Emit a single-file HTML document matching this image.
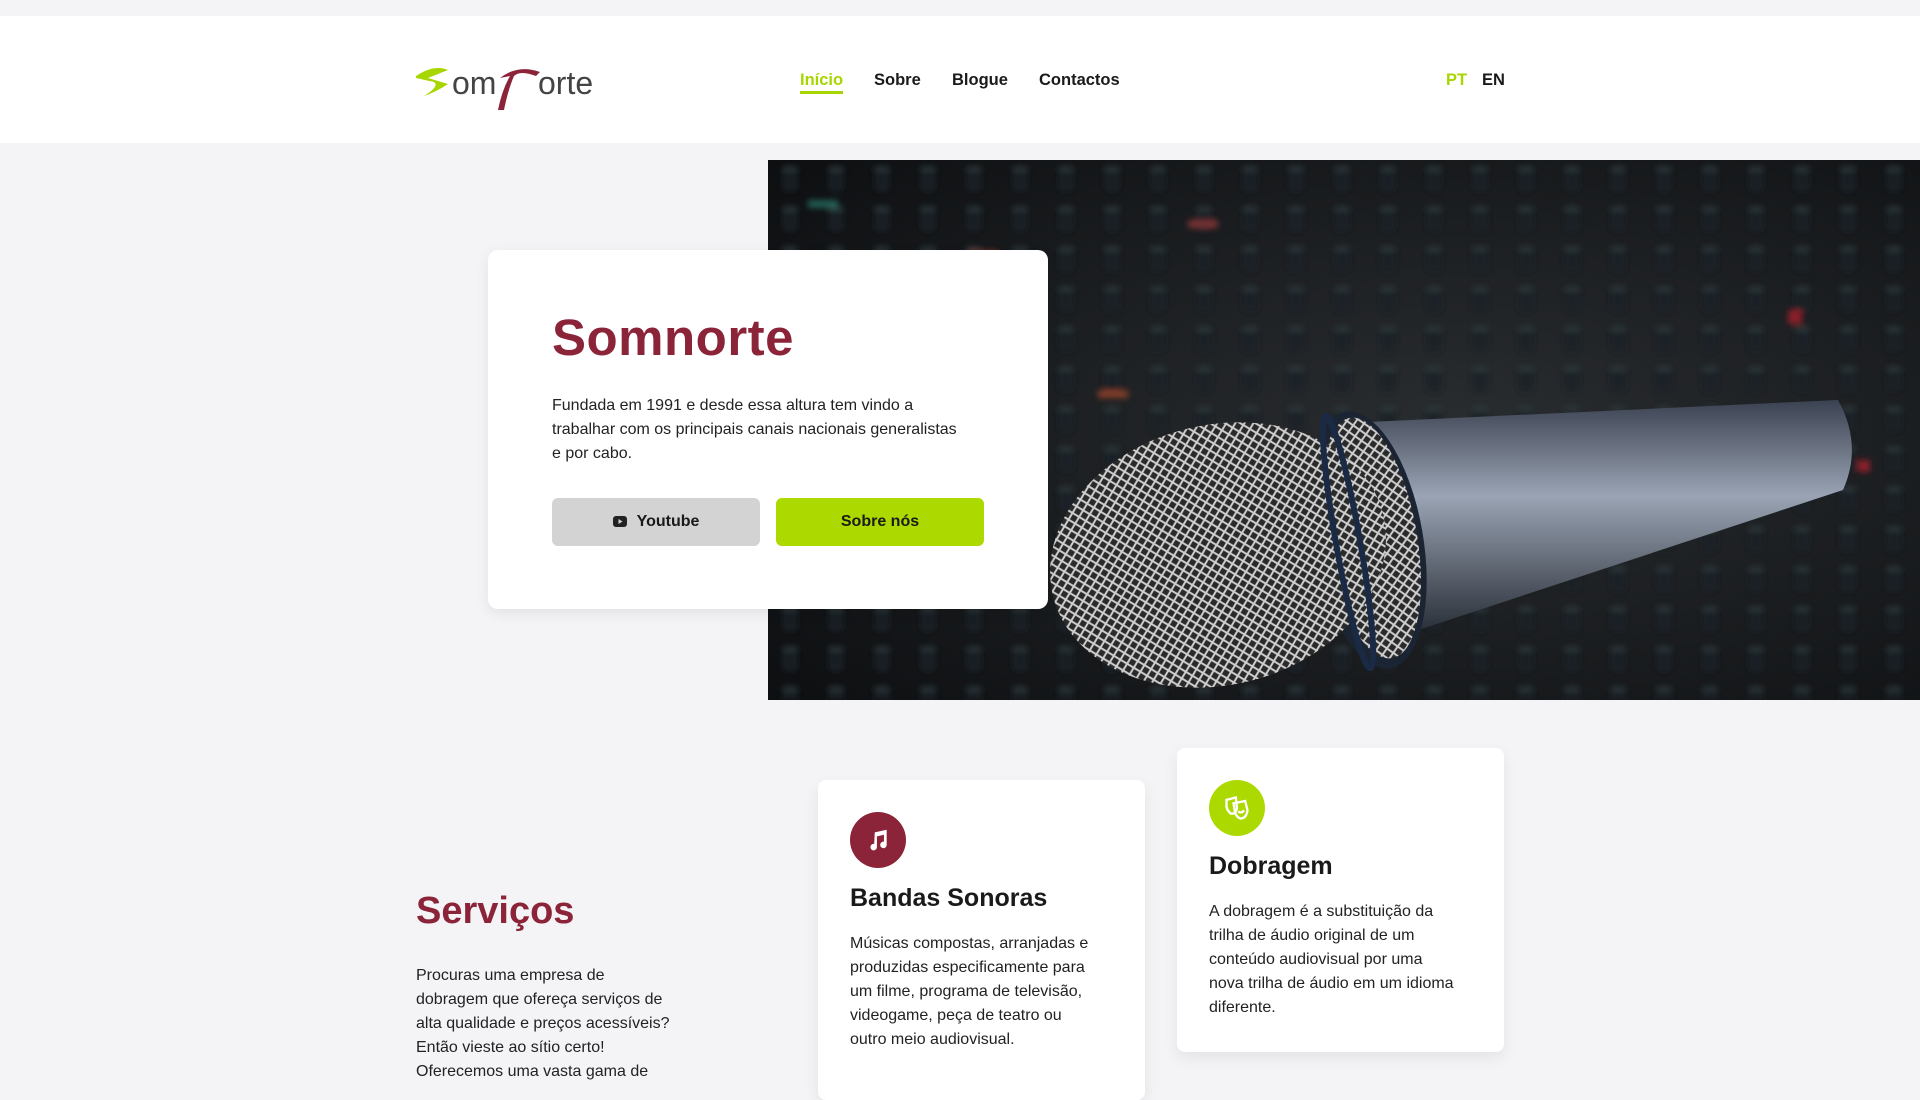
<!DOCTYPE html>
<html><head><meta charset="utf-8"><style>
*{margin:0;padding:0;box-sizing:border-box}
body{width:1920px;height:1080px;overflow:hidden;background:#f4f4f6;font-family:"Liberation Sans",sans-serif;color:#222;position:relative}
header{position:absolute;left:0;top:16px;width:1920px;height:127px;background:#fff}
.nav a{position:absolute;top:55px;font-size:16.5px;font-weight:bold;color:#1a1a1a;text-decoration:none}
.hero{position:absolute;left:768px;top:160px;width:1152px;height:540px;overflow:hidden;background:#111}
.card{position:absolute;left:488px;top:250px;width:560px;height:359px;background:#fff;border-radius:10px;box-shadow:0 4px 14px rgba(0,0,0,.08)}
h1{position:absolute;left:64px;top:58px;font-size:51px;color:#8b2439;font-weight:bold;letter-spacing:.5px}
.card p{position:absolute;left:64px;top:144px;width:460px;font-size:16px;line-height:24px;color:#222}
.btn{position:absolute;top:248px;width:208px;height:48px;border-radius:6px;font-size:16px;font-weight:bold;display:flex;align-items:center;justify-content:center;color:#1a1a1a}
.sc{position:absolute;width:327px;background:#fff;border-radius:8px;box-shadow:0 6px 16px rgba(0,0,0,.07)}
.ic{position:absolute;left:32px;width:56px;height:56px;border-radius:50%;display:flex;align-items:center;justify-content:center}
.sc h3{position:absolute;left:32px;font-size:25px;font-weight:bold;color:#1a1a1a}
.sc p{position:absolute;left:32px;width:290px;font-size:16px;line-height:24px;color:#222}
</style></head><body>
<header>
<svg style="position:absolute;left:414px;top:44px" width="200" height="52" viewBox="0 0 200 52">
<path d="M2 16 Q20 4 34 10 L14 18 L34 24 Q22 32 10 36 Q26 26 20 22 L2 18Z" fill="#a8d600"/>
<text x="38" y="34" font-family="Liberation Sans" font-size="32" fill="#444">om</text>
<path d="M86 18 Q104 4 126 12 L122 16 Q106 10 100 16 Q94 30 90 50 L84 50 Q88 30 96 16 Z" fill="#8b2439"/>
<text x="124" y="34" font-family="Liberation Sans" font-size="32" fill="#444">orte</text>
</svg>
<div class="nav">
<a style="left:800px;color:#a8d600;border-bottom:3px solid #a8d600;padding-bottom:1px">Início</a>
<a style="left:874px">Sobre</a>
<a style="left:952px">Blogue</a>
<a style="left:1039px">Contactos</a>
<a style="left:1446px;color:#a8d600">PT</a>
<a style="left:1482px">EN</a>
</div>
</header>
<div class="hero">
<svg width="1152" height="540" viewBox="0 0 1152 540">
<defs>
<radialGradient id="bg" cx="0.6" cy="0.5" r="0.8"><stop offset="0" stop-color="#2a2d30"/><stop offset="1" stop-color="#0c0e10"/></radialGradient>
<linearGradient id="tube" x1="0" y1="0" x2="0" y2="1"><stop offset="0" stop-color="#3a4150"/><stop offset="0.4" stop-color="#9aa4b4"/><stop offset="1" stop-color="#232830"/></linearGradient>
<pattern id="mesh" width="11" height="11" patternUnits="userSpaceOnUse"><rect width="11" height="11" fill="#2a2a2a"/><path d="M0 0L11 11M11 0L0 11" stroke="#cfcfcf" stroke-width="2"/></pattern>
<pattern id="knobs" width="46" height="40" patternUnits="userSpaceOnUse"><rect x="14" y="6" width="16" height="26" rx="6" fill="#1a2024"/><rect x="14" y="6" width="16" height="6" rx="3" fill="#2c383c"/></pattern>
<filter id="bl"><feGaussianBlur stdDeviation="3"/></filter>
</defs>
<rect width="1152" height="540" fill="url(#bg)"/>
<g filter="url(#bl)"><rect width="1152" height="540" fill="url(#knobs)" opacity=".8"/>
<g opacity=".6"><rect x="40" y="40" width="30" height="8" fill="#2e8a7a"/><rect x="200" y="90" width="30" height="8" fill="#a04030"/><rect x="420" y="60" width="30" height="8" fill="#b04040"/><rect x="330" y="230" width="30" height="8" fill="#c05030"/><rect x="120" y="250" width="30" height="8" fill="#2e8a7a"/><rect x="1020" y="150" width="14" height="14" fill="#d02030"/><rect x="1090" y="300" width="12" height="12" fill="#d02030"/></g></g>
<path d="M600 262 L1070 240 Q1095 285 1075 330 L620 480 Z" fill="url(#tube)"/>
<ellipse cx="600" cy="380" rx="55" ry="130" fill="#1b2433" transform="rotate(-10 600 380)"/>
<ellipse cx="603" cy="378" rx="46" ry="122" fill="url(#mesh)" transform="rotate(-10 603 378)"/>
<ellipse cx="450" cy="395" rx="170" ry="130" fill="url(#mesh)" transform="rotate(-14 450 395)"/>
<ellipse cx="580" cy="382" rx="12" ry="128" fill="none" stroke="#1b2a44" stroke-width="6" transform="rotate(-10 580 382)"/>
</svg>
</div>
<div class="card">
<h1>Somnorte</h1>
<p>Fundada em 1991 e desde essa altura tem vindo a<br>trabalhar com os principais canais nacionais generalistas<br>e por cabo.</p>
<div class="btn" style="left:64px;background:#d3d3d3"><svg width="14" height="12" viewBox="0 0 14 12" style="margin-right:10px"><rect width="14" height="11" rx="3" fill="#222"/><path d="M5.5 3L9.5 5.5L5.5 8Z" fill="#d3d3d3"/></svg>Youtube</div>
<div class="btn" style="left:288px;background:#acd900">Sobre nós</div>
</div>
<div style="position:absolute;left:416px;top:890px;font-size:38px;font-weight:bold;color:#8b2439">Serviços</div>
<p style="position:absolute;left:416px;top:964px;width:300px;font-size:16px;line-height:24px">Procuras uma empresa de<br>dobragem que ofereça serviços de<br>alta qualidade e preços acessíveis?<br>Então vieste ao sítio certo!<br>Oferecemos uma vasta gama de</p>
<div class="sc" style="left:818px;top:780px;height:320px">
<div class="ic" style="top:32px;background:#8b2439"><svg width="26" height="26" viewBox="0 0 24 24"><path d="M9 5 L20 2.5 V16.5 A3 3 0 1 1 17.5 13.6 V7.2 L11 8.7 V18.5 A3 3 0 1 1 8.5 15.6 Z" fill="#fff"/></svg></div>
<h3 style="top:104px">Bandas Sonoras</h3>
<p style="top:152px">Músicas compostas, arranjadas e<br>produzidas especificamente para<br>um filme, programa de televisão,<br>videogame, peça de teatro ou<br>outro meio audiovisual.</p>
</div>
<div class="sc" style="left:1177px;top:748px;height:304px">
<div class="ic" style="top:32px;background:#acd900"><svg width="28" height="28" viewBox="0 0 24 24" fill="none" stroke="#fff" stroke-width="2"><path d="M3 5 L11 3 L12 12 Q11 17 7 17 Q4 15 3 11Z"/><path d="M9 8 L19 6 L21 14 Q20 21 15 21 Q11 20 10 14Z"/><path d="M13 15 Q16 17 18 14"/></svg></div>
<h3 style="top:104px">Dobragem</h3>
<p style="top:152px">A dobragem é a substituição da<br>trilha de áudio original de um<br>conteúdo audiovisual por uma<br>nova trilha de áudio em um idioma<br>diferente.</p>
</div>
</body></html>
